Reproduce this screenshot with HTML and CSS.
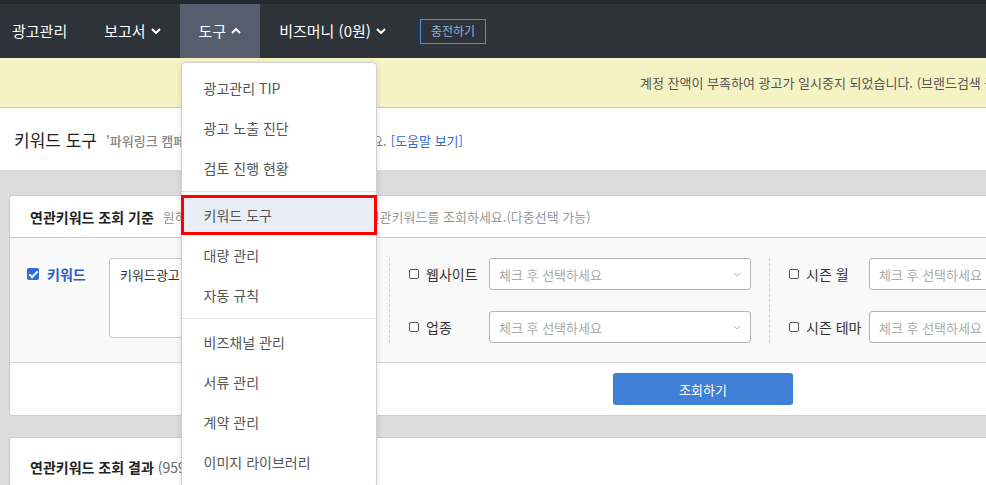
FILE: index.html
```html
<!DOCTYPE html>
<html lang="ko">
<head>
    <meta charset="UTF-8">
    <meta name="viewport" content="width=device-width, initial-scale=1.0">
    <title>키워드 도구</title>
    <link rel="stylesheet" href="styles.css">
</head>
<body>
    <div class="wrap">
        <nav class="gnb">
            <a class="gnb-item">광고관리</a>
            <a class="gnb-item">보고서
                <svg class="caret" viewBox="0 0 10 6"><path d="M1 1l4 4 4-4"/></svg>
            </a>
            <div class="gnb-item active">도구
                <svg class="caret" viewBox="0 0 10 6"><path d="M1 5l4-4 4 4"/></svg>

                <ul class="dropdown">
                    <li>광고관리 TIP</li>
                    <li>광고 노출 진단</li>
                    <li>검토 진행 현황</li>
                    <li class="sep"></li>
                    <li class="selected">키워드 도구</li>
                    <li>대량 관리</li>
                    <li>자동 규칙</li>
                    <li class="sep"></li>
                    <li>비즈채널 관리</li>
                    <li>서류 관리</li>
                    <li>계약 관리</li>
                    <li>이미지 라이브러리</li>
                </ul>
            </div>
            <a class="gnb-item">비즈머니 (0원)
                <svg class="caret" viewBox="0 0 10 6"><path d="M1 1l4 4 4-4"/></svg>
            </a>
            <button class="charge-btn">충전하기</button>
        </nav>

        <div class="notice">계정 잔액이 부족하여 광고가 일시중지 되었습니다. (브랜드검색 광고는 계약 기간 동안 노출됩니다.)</div>

        <div class="page-head">
            <h1 class="page-title">키워드 도구</h1>
            <p class="page-desc"><b>'파워링크 캠페인'</b>에 새로운 키워드를 추가해 보세요.<a class="help-link">[도움말 보기]</a></p>
        </div>

        <div class="content">
            <section class="panel">
                <div class="panel-head">
                    <strong>연관키워드 조회 기준</strong>
                    <span class="hint">원하는 기준을 하나 이상 입력하여, 새 연관키워드를 조회하세요.(다중선택 가능)</span>
                </div>

                <div class="panel-body">
                    <div class="group-keyword">
                        <div class="row">
                            <span class="check checked"></span>
                            <label class="field-label blue">키워드</label>
                        </div>
                        <div class="textarea">키워드광고</div>
                    </div>

                    <div class="group">
                        <div class="row">
                            <span class="check"></span>
                            <label class="field-label">웹사이트</label>
                            <div class="select">체크 후 선택하세요
                                <svg class="sel-caret" viewBox="0 0 10 6"><path d="M1 1l4 4 4-4"/></svg>
                            </div>
                        </div>
                        <div class="row">
                            <span class="check"></span>
                            <label class="field-label">업종</label>
                            <div class="select">체크 후 선택하세요
                                <svg class="sel-caret" viewBox="0 0 10 6"><path d="M1 1l4 4 4-4"/></svg>
                            </div>
                        </div>
                    </div>

                    <div class="group">
                        <div class="row">
                            <span class="check"></span>
                            <label class="field-label">시즌 월</label>
                            <div class="select">체크 후 선택하세요
                                <svg class="sel-caret" viewBox="0 0 10 6"><path d="M1 1l4 4 4-4"/></svg>
                            </div>
                        </div>
                        <div class="row">
                            <span class="check"></span>
                            <label class="field-label">시즌 테마</label>
                            <div class="select">체크 후 선택하세요
                                <svg class="sel-caret" viewBox="0 0 10 6"><path d="M1 1l4 4 4-4"/></svg>
                            </div>
                        </div>
                    </div>
                </div>

                <div class="panel-foot">
                    <button class="search-btn">조회하기</button>
                </div>
            </section>

            <section class="panel">
                <div class="panel-head result-head">
                    <strong>연관키워드 조회 결과</strong>
                    <span class="count">(959개)</span>
                </div>
            </section>
        </div>
    </div>
</body>
</html>
```

FILE: styles.css
```css
:root {
    --nav: #2d3338;
    --nav-top: #23282c;
    --nav-active: #565e6d;
    --blue: #3f7fd6;
    --link: #2f6bd1;
    --line: #cccccc;
    --text: #222222;
}

html, body {
    margin: 0;
    padding: 0;
    overflow: hidden;
}

body {
    font-family: "Noto Sans CJK KR", "Noto Sans", sans-serif;
    color: var(--text);
    background-color: #dcdcdc;
    font-size: 13px;
}

.wrap {
    width: 1406px;
}

/* top navigation */
.gnb {
    display: flex;
    align-items: center;
    height: 54px;
    background-color: var(--nav);
    border-top: 4px solid var(--nav-top);
    padding-left: 12px;
}

.gnb-item {
    position: relative;
    display: flex;
    align-items: center;
    gap: 5px;
    height: 100%;
    padding: 0 19px;
    color: #ffffff;
    font-size: 15px;
    line-height: 20px;
}

.gnb-item:first-child {
    padding-left: 0;
    padding-right: 18px;
}

.gnb-item.active {
    background-color: var(--nav-active);
}

.caret {
    width: 10px;
    height: 6px;
    fill: none;
    stroke: #ffffff;
    stroke-width: 2;
}

.charge-btn {
    margin-left: 15px;
    height: 25px;
    padding: 0 10px;
    background: transparent;
    border: 1px solid #4a8fdc;
    color: #8eb3df;
    font-family: inherit;
    font-size: 12px;
    line-height: 18px;
}

/* dropdown menu */
.dropdown {
    position: absolute;
    top: 58px;
    left: 1px;
    width: 194px;
    margin: 0;
    padding: 5px 0 5px;
    list-style: none;
    background-color: #ffffff;
    border: 1px solid #d0d0d0;
    border-radius: 4px;
    box-shadow: 0 2px 6px rgba(0,0,0,0.12);
    z-index: 10;
}

.dropdown li {
    height: 40px;
    line-height: 40px;
    padding-left: 22px;
    color: #555555;
    font-size: 14px;
}

.dropdown li.sep {
    height: 1px;
    margin: 3px 0;
    padding: 0;
    background-color: #e3e3e3;
}

.dropdown li.selected {
    margin: 0 -1px;
    height: 34px;
    line-height: 34px;
    padding-left: 20px;
    background-color: #e9edf5;
    border: 3px solid #ff0000;
}

/* notice */
.notice {
    height: 49px;
    line-height: 49px;
    padding-left: 640px;
    background-color: #f5f3c3;
    border-bottom: 1px solid #c8c8c8;
    color: #555555;
    font-size: 13px;
    white-space: nowrap;
}

/* page header */
.page-head {
    display: flex;
    align-items: center;
    gap: 9px;
    height: 62px;
    padding-left: 14px;
    background-color: #ffffff;
}

.page-title {
    margin: 0;
    font-size: 17px;
    font-weight: normal;
    color: #222222;
}

.page-desc {
    margin: 2px 0 0;
    color: #888888;
    font-size: 13px;
}

.page-desc b {
    font-weight: 500;
}

.help-link {
    color: var(--link);
    margin-left: 4px;
}

/* content */
.content {
    padding: 25px 9px;
    display: flex;
    flex-direction: column;
    gap: 21px;
}

.panel {
    background-color: #ffffff;
    border: 1px solid var(--line);
    border-radius: 3px;
}

.panel-head {
    display: flex;
    align-items: center;
    gap: 9px;
    height: 41px;
    padding-left: 20px;
    border-bottom: 1px solid var(--line);
}

.panel-head strong {
    font-size: 14px;
    font-weight: bold;
    color: #222222;
}

.hint {
    color: #999999;
    font-size: 13px;
}

.result-head {
    height: 58px;
    border-bottom: none;
    gap: 4px;
}

.count {
    color: #666666;
    font-size: 14px;
}

.panel-body {
    display: flex;
    padding: 20px 0 19px 17px;
    background-color: #f9f9f9;
    border-bottom: 1px solid #d6d6d6;
}

.group-keyword {
    display: flex;
    align-items: flex-start;
    width: 362px;
    height: 85px;
}

.group {
    display: flex;
    flex-direction: column;
    gap: 21px;
    width: 360px;
    padding-left: 19px;
    border-left: 1px dashed #cfcfcf;
}

.row {
    display: flex;
    align-items: center;
    height: 32px;
}

.check {
    flex: none;
    width: 8px;
    height: 8px;
    border: 1.5px solid #555555;
    border-radius: 2px;
    margin-right: 7px;
    background-color: #ffffff;
}

.check.checked {
    width: 12px;
    height: 12px;
    margin-right: 8px;
    border: none;
    background-color: #2e6be0;
    position: relative;
}

.check.checked::after {
    content: "";
    position: absolute;
    left: 4px;
    top: 1px;
    width: 3px;
    height: 7px;
    border: solid #ffffff;
    border-width: 0 2px 2px 0;
    transform: rotate(45deg);
}

.field-label {
    width: 63px;
    font-size: 14px;
    color: #333333;
}

.field-label.blue {
    width: 62px;
    color: #2b5fce;
    font-weight: bold;
}

.textarea {
    width: 241px;
    height: 66px;
    padding: 6px 10px;
    background-color: #ffffff;
    border: 1px solid #c8c8c8;
    border-radius: 3px;
    color: #333333;
    font-size: 13px;
}

.select {
    display: flex;
    align-items: center;
    justify-content: space-between;
    width: 242px;
    height: 30px;
    padding: 0 9px;
    background-color: #ffffff;
    border: 1px solid #b3b3b3;
    border-radius: 3px;
    color: #aaaaaa;
    font-size: 13px;
    white-space: nowrap;
}

.sel-caret {
    width: 8px;
    height: 5px;
    fill: none;
    stroke: #aaaaaa;
    stroke-width: 1.2;
}

.panel-foot {
    display: flex;
    justify-content: center;
    padding: 10px 0;
}

.search-btn {
    width: 180px;
    height: 32px;
    background-color: var(--blue);
    border: none;
    border-radius: 3px;
    color: #ffffff;
    font-family: inherit;
    font-size: 13px;
}
```
